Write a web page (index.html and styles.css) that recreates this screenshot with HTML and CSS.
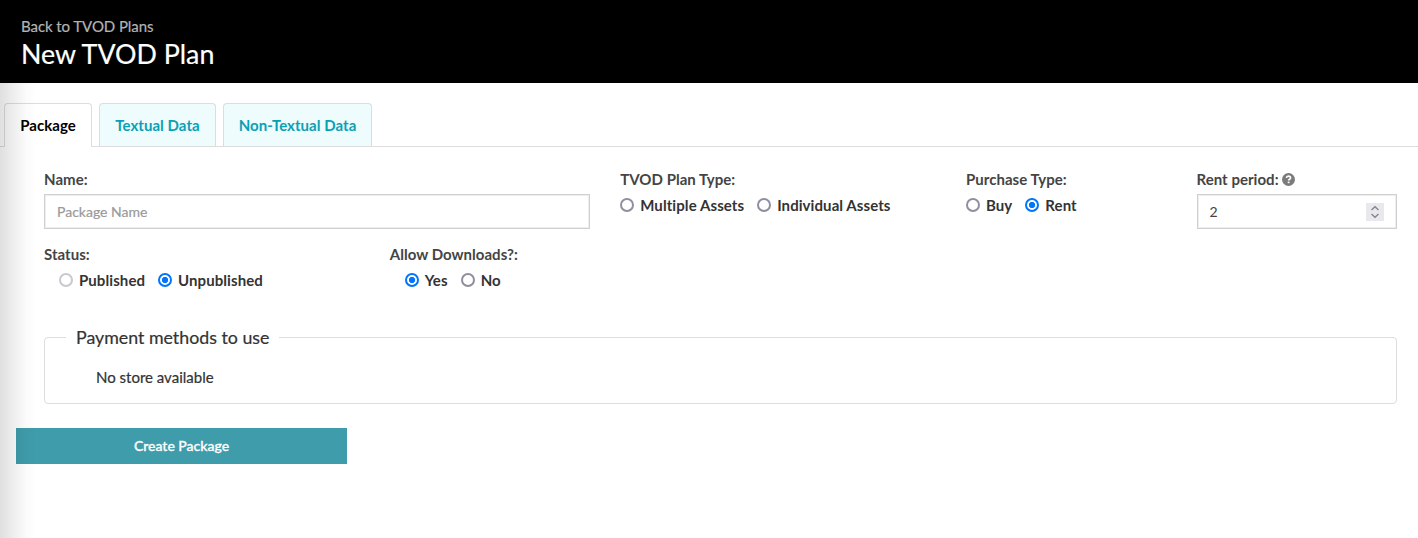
FILE: index.html
```html
<!DOCTYPE html>
<html lang="en">
<head>
<meta charset="utf-8">
<title>New TVOD Plan</title>
<link rel="stylesheet" href="styles.css">
</head>
<body>
<header class="page-header">
  <a class="back-link">Back to TVOD Plans</a>
  <h1 class="page-title">New TVOD Plan</h1>
</header>
<main class="content">
  <nav class="tabs">
    <a class="tab tab-active">Package</a>
    <a class="tab tab-textual">Textual Data</a>
    <a class="tab tab-media">Non-Textual Data</a>
  </nav>
  <form class="form">
    <div class="row row-main">
      <div class="col span-5">
        <label class="label">Name:</label>
        <div class="input placeholder">Package Name</div>
      </div>
      <div class="col span-3">
        <label class="label">TVOD Plan Type:</label>
        <div class="options">
          <label class="option"><span class="radio"></span><span>Multiple Assets</span></label>
          <label class="option"><span class="radio"></span><span>Individual Assets</span></label>
        </div>
      </div>
      <div class="col span-2">
        <label class="label">Purchase Type:</label>
        <div class="options">
          <label class="option"><span class="radio"></span><span>Buy</span></label>
          <label class="option"><span class="radio checked"></span><span>Rent</span></label>
        </div>
      </div>
      <div class="col span-2">
        <label class="label">Rent period:<svg class="help" viewBox="0 0 12 12"><circle cx="6" cy="6" r="6" fill="#7b7b7b"/><path d="M4 4.6C4.2 3.4 5 2.9 6 2.9c1.1 0 1.9.6 1.9 1.6C7.900 5.800 6.100 5.700 6.100 7" fill="none" stroke="#fff" stroke-width="1.5"/><rect x="5.300" y="7.900" width="1.600" height="1.500" fill="#fff"/></svg></label>
        <div class="input number"><span>2</span>
          <span class="spinner"><svg viewBox="0 0 18 18" width="18" height="18"><path d="M5.500 7 9 3.700 12.500 7M5.500 11 9 14.300 12.500 11" fill="none" stroke="#83828e" stroke-width="1.300"/></svg></span>
        </div>
      </div>
    </div>
    <div class="row row-status">
      <div class="col span-3">
        <label class="label">Status:</label>
        <div class="options indented">
          <label class="option"><span class="radio disabled"></span><span>Published</span></label>
          <label class="option"><span class="radio checked"></span><span>Unpublished</span></label>
        </div>
      </div>
      <div class="col span-3">
        <label class="label">Allow Downloads?:</label>
        <div class="options indented">
          <label class="option"><span class="radio checked"></span><span>Yes</span></label>
          <label class="option"><span class="radio"></span><span>No</span></label>
        </div>
      </div>
    </div>
    <fieldset class="payments">
      <legend class="legend">Payment methods to use</legend>
      <p class="empty">No store available</p>
    </fieldset>
  </form>
  <button class="submit" type="button">Create Package</button>
  <div class="edge-shadow"></div>
</main>
</body>
</html>
```
FILE: styles.css
```css
* { box-sizing: border-box; }
body {
  margin: 0;
  height: 538px;
  display: flex;
  flex-direction: column;
  font: 15px/20px Lato, sans-serif;
  color: #333;
  background: #fff;
  overflow: hidden;
}
.page-header {
  height: 83px;
  padding: 16px 21px 0;
  background: #000;
}
.back-link { display: block; color: #b3b3b3; line-height: 20px; letter-spacing: -.07px; -webkit-text-stroke: .2px; }
.page-title {
  margin: 1px 0 0;
  font-size: 26.800px;
  font-weight: 400;
  line-height: 34px;
  color: #fff;
  -webkit-text-stroke: .2px;
}
.content { position: relative; flex: 1; }
.edge-shadow {
  position: absolute;
  inset: 0 auto 0 0;
  width: 36px;
  background: linear-gradient(to right, rgba(0,0,0,.125), rgba(0,0,0,.07) 35%, rgba(0,0,0,.02) 70%, transparent);
  pointer-events: none;
}
.tabs {
  display: flex;
  gap: 7px;
  height: 64px;
  padding: 20px 0 0 4px;
  border-bottom: 1px solid #ddd;
}
.tab {
  height: 43px;
  border: 1px solid #ddd;
  border-bottom: 0;
  border-radius: 4px 4px 0 0;
  background: #eefcfd;
  color: #0aa0b4;
  font-weight: 700;
  letter-spacing: .04px;
  line-height: 42px;
  text-align: center;
}
.tab-active { width: 88px; height: 44px; background: #fff; color: #000; }
.tab-textual { width: 117px; }
.tab-media { width: 149px; }
.form { padding: 22px 6px 0 29px; }
.row { display: grid; grid-template-columns: repeat(12, 1fr); }
.row-main { height: 75px; }
.row-status { height: 82px; }
.col { padding: 0 15px; }
.span-5 { grid-column: span 5; }
.span-3 { grid-column: span 3; }
.span-2 { grid-column: span 2; }
.label { display: flex; align-items: center; height: 20px; color: #444; font-weight: 700; letter-spacing: .03px; white-space: nowrap; }
.help { width: 13px; height: 13px; margin-left: 3px; }
.input {
  display: flex;
  align-items: center;
  height: 35px;
  margin-top: 5px;
  padding: 0 12px;
  border: 1px solid #d0d0d0;
  box-shadow: inset 0 0 0 1px #eee;
  font-size: 14px;
  color: #444;
}
.placeholder { color: #999; -webkit-text-stroke: .2px; }
.number { justify-content: space-between; }
.spinner { display: flex; width: 18px; height: 18px; background: #e9e9ed; }
.options { display: flex; gap: 13px; height: 20px; margin-top: 6px; }
.indented { margin-left: 15px; margin-top: 6px; }
.option { display: flex; align-items: center; gap: 6px; font-weight: 700; letter-spacing: .08px; white-space: nowrap; color: #333; }
.radio {
  flex: none;
  width: 14px;
  height: 14px;
  border: 2px solid #8f8f9d;
  border-radius: 50%;
  background: #fff;
}
.disabled { border-color: #c9c8d0; }
.checked { border-color: #0075ff; background: radial-gradient(circle, #0075ff 2.800px, #fff 3.400px); }
.payments {
  height: 78px;
  margin: 0 15px;
  padding: 0 21px;
  border: 1px solid #ddd;
  border-radius: 4px;
}
.legend { padding: 0 10px; font-size: 17.800px; line-height: 22px; -webkit-text-stroke: .2px; }
.empty { margin: 19px 0 0 30px; -webkit-text-stroke: .2px; }
.submit {
  display: block;
  width: 331px;
  height: 36px;
  margin: 24px 0 0 16px;
  padding: 0;
  border: 0;
  background: #3f9caa;
  color: #fff;
  font: 500 14px/36px Lato, sans-serif;
  -webkit-text-stroke: .3px;
}
```
